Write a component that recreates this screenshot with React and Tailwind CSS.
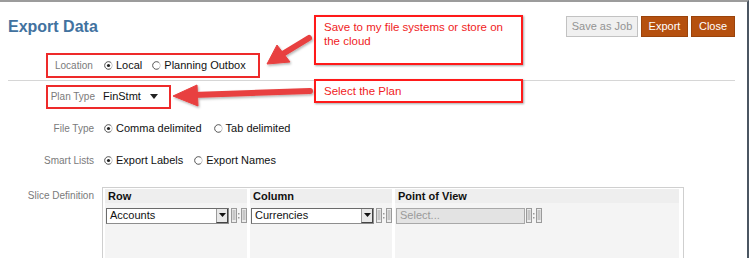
import React from 'react';

const Radio = ({ checked }) => (
  <svg width="9" height="9" viewBox="0 0 9 9" className="shrink-0">
    <path d="M7.5 2.2 A3.8 3.8 0 1 0 7.6 6.6" fill="none" stroke="#555" strokeWidth="1" />
    <path d="M7.6 6.6 A3.8 3.8 0 0 0 7.5 2.2" fill="none" stroke="#ccc" strokeWidth="1" />
    {checked && <circle cx="4.5" cy="4.5" r="1.6" fill="#222" />}
  </svg>
);

const Option = ({ checked, label, className = '' }) => (
  <span className={`inline-flex items-center gap-[3px] ${className}`}>
    <Radio checked={checked} />
    <span>{label}</span>
  </span>
);

const MoveIcons = () => (
  <svg width="16" height="15" viewBox="0 0 16 15" className="shrink-0">
    <rect x="0.5" y="0.5" width="5" height="14" fill="#ececec" stroke="#9a9a9a" />
    <path d="M1.5 3h3M1.5 5h3M1.5 7h3M1.5 9h3M1.5 11h3" stroke="#a0a0a0" />
    <rect x="7" y="5" width="1.5" height="1.5" fill="#9a9a9a" />
    <rect x="7" y="9" width="1.5" height="1.5" fill="#9a9a9a" />
    <rect x="10.5" y="0.5" width="5" height="14" fill="#ececec" stroke="#9a9a9a" />
    <path d="M11.5 3h3M11.5 5h3M11.5 7h3M11.5 9h3M11.5 11h3" stroke="#a0a0a0" />
  </svg>
);

const Select = ({ value, width }) => (
  <div className="flex items-center gap-[2px]">
    <div
      className={`flex items-center h-[16px] ${width} bg-white border border-[#8d8d8d] border-t-[#6b6b6b] border-l-[#6b6b6b]`}
    >
      <span className="flex-1 pl-[3px] text-[11px] text-[#111] leading-none">{value}</span>
      <span className="flex items-center justify-center w-[12px] h-[14px] bg-[#e8e8e8] border-l border-[#9b9b9b] border-r border-b border-r-[#444] border-b-[#444]">
        <svg width="7" height="4" viewBox="0 0 7 4">
          <path d="M0 0h7L3.5 4z" fill="#111" />
        </svg>
      </span>
    </div>
    <MoveIcons />
  </div>
);

const Column = ({ title, children, width }) => (
  <div className={`${width} bg-[#f4f4f4] flex flex-col`}>
    <div className="h-[14px] bg-[#eeeeee] pl-[3px] text-[11px] font-bold text-[#111] leading-[14px]">
      {title}
    </div>
    <div className="pt-[5px] pl-[1px] h-[60px]">{children}</div>
  </div>
);

export default function App() {
  return (
    <div className="relative w-[749px] h-[258px] overflow-hidden bg-white border-t-2 border-t-[#9c9c9c] border-r-2 border-r-[#4b5662] font-['Liberation_Sans',Arial,sans-serif]">
      <div className="flex items-start justify-between h-[50px] pl-2 pr-[12px] pt-[14px]">
        <h1 className="text-[16px] font-bold text-[#42729f] leading-[20px] mt-[1px]">Export Data</h1>
        <div className="flex gap-[3px]">
          <button className="h-[21px] w-[72px] bg-[#f0f0f0] border border-[#c2c2c2] text-[11px] text-[#939393]">
            Save as Job
          </button>
          <button className="h-[21px] w-[47px] bg-[#b5500f] border border-[#9a430b] text-[11px] text-white">
            Export
          </button>
          <button className="h-[21px] w-[44px] bg-[#b5500f] border border-[#9a430b] text-[11px] text-white">
            Close
          </button>
        </div>
      </div>

      <div className="h-[28px] pl-[46px]">
        <div className="inline-flex items-center h-[25px] w-[214px] border-2 border-[#ee2a2a] pl-[7px]">
          <span className="text-[10px] text-[#7a7a7a] w-[49px]">Location</span>
          <Option checked label="Local" className="text-[11px] text-[#111]" />
          <Option label="Planning Outbox" className="text-[11px] text-[#111] ml-[10px]" />
        </div>
      </div>

      <div className="h-px ml-2 mr-[12px] bg-[#d6d6d6]" />

      <div className="mt-[2px] pl-[46px]">
        <div className="inline-flex items-center h-[24px] w-[125px] border-2 border-[#ee2a2a] pl-[1px]">
          <span className="text-[10px] text-[#7a7a7a] w-[46px] text-right">Plan Type</span>
          <span className="ml-[8px] text-[11px] text-[#111]">FinStmt</span>
          <svg width="8" height="5" viewBox="0 0 8 5" className="ml-[9px]">
            <path d="M0 0h8L4 5z" fill="#222" />
          </svg>
        </div>
      </div>

      <div className="mt-[10px] h-[20px] flex items-center">
        <span className="w-[94px] text-right text-[10px] text-[#7a7a7a]">File Type</span>
        <div className="ml-[10px] flex items-center text-[11px] text-[#111]">
          <Option checked label="Comma delimited" />
          <Option label="Tab delimited" className="ml-[12px]" />
        </div>
      </div>

      <div className="mt-[12px] h-[20px] flex items-center">
        <span className="w-[94px] text-right text-[10px] text-[#7a7a7a]">Smart Lists</span>
        <div className="ml-[10px] flex items-center text-[11px] text-[#111]">
          <Option checked label="Export Labels" />
          <Option label="Export Names" className="ml-[11px]" />
        </div>
      </div>

      <div className="mt-[16px] flex items-start">
        <span className="w-[94px] text-right text-[10px] text-[#7a7a7a] mt-[1px]">Slice Definition</span>
        <div className="ml-[8px] w-[582px] h-[80px] border border-[#cfcfcf] flex gap-[3px] pl-[2px] pr-[4px] pt-[1px]">
          <Column title="Row" width="w-[142px]">
            <Select value="Accounts" width="w-[123px]" />
          </Column>
          <Column title="Column" width="w-[142px]">
            <Select value="Currencies" width="w-[123px]" />
          </Column>
          <Column title="Point of View" width="flex-1">
            <div className="flex items-center gap-[1px]">
              <div className="flex items-center h-[16px] w-[129px] bg-[#e3e3e3] border border-[#a8a8a8] pl-[3px] text-[11px] text-[#9a9a9a]">
                Select...
              </div>
              <MoveIcons />
            </div>
          </Column>
        </div>
      </div>

      <div className="absolute left-[314px] top-[13px] w-[209px] h-[50px] border-2 border-[#ff1a1a] bg-white shadow-[1px_1px_2px_rgba(0,0,0,0.35)] pl-[8px] pt-[3px] text-[11.5px] leading-[14px] text-[#f01c24]">
        Save to my file systems or store on the cloud
      </div>
      <div className="absolute left-[314px] top-[77px] w-[209px] h-[24px] border-2 border-[#ff1a1a] bg-white shadow-[1px_1px_2px_rgba(0,0,0,0.35)] pl-[8px] pt-[3px] text-[11.5px] leading-[14px] text-[#f01c24]">
        Select the Plan
      </div>

      <svg className="absolute left-0 top-0 pointer-events-none" width="749" height="258" viewBox="0 2 749 258">
        <defs>
          <filter id="sh" x="-20%" y="-20%" width="140%" height="140%">
            <feDropShadow dx="1" dy="1.5" stdDeviation="1" floodColor="#000" floodOpacity="0.3" />
          </filter>
        </defs>
        <g filter="url(#sh)" fill="#e8403f" stroke="#e8403f">
          <line x1="309" y1="38" x2="281" y2="55" strokeWidth="6" strokeLinecap="round" />
          <path d="M267 64 L277 45 L290 62 Z" strokeWidth="1" strokeLinejoin="round" />
          <line x1="310" y1="91" x2="193" y2="95" strokeWidth="6" strokeLinecap="round" />
          <path d="M173 96 L197 85 L198 106 Z" strokeWidth="1" strokeLinejoin="round" />
        </g>
      </svg>
    </div>
  );
}
